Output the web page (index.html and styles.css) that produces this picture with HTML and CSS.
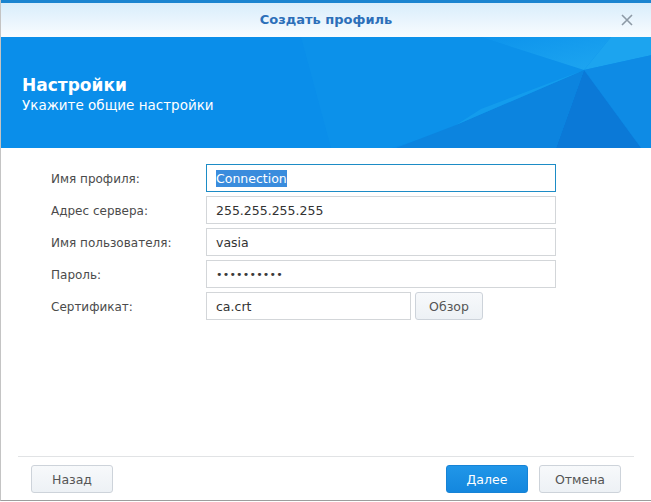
FILE: index.html
```html
<!DOCTYPE html>
<html lang="ru">
<head>
<meta charset="utf-8">
<title>Создать профиль</title>
<link rel="stylesheet" href="styles.css">
</head>
<body>
<div class="window">
  <div class="titlebar">
    <span class="title">Создать профиль</span>
    <span class="close" aria-label="Закрыть">
      <svg width="12" height="12" viewBox="0 0 12 12"><path d="M1 1 L11 11 M11 1 L1 11" stroke="#8d9aa6" stroke-width="1.6" fill="none"/></svg>
    </span>
  </div>

  <div class="banner">
    <svg class="banner-art" viewBox="0 0 651 111" preserveAspectRatio="none">
      <defs>
        <linearGradient id="glow" x1="0" y1="0" x2="1" y2="1">
          <stop offset="0" stop-color="#0d93ec"/>
          <stop offset="1" stop-color="#1ea6f0"/>
        </linearGradient>
      </defs>
      <polygon points="300,0 480,0 583,33 460,90 390,111 330,111" fill="#0f94ec" opacity="0.45"/>
      <polygon points="480,0 610,0 583,33" fill="url(#glow)"/>
      <polygon points="610,0 651,0 651,18 583,33" fill="#1ca4ef"/>
      <polygon points="583,33 651,18 651,111 640,111" fill="#0e8be5"/>
      <polygon points="583,33 640,111 555,111" fill="#0b79d7"/>
      <polygon points="583,33 555,111 395,111 455,88" fill="#0c84df"/>
      <polygon points="583,33 455,88 480,72" fill="#16a0ee" opacity="0.75"/>
    </svg>
    <div class="banner-text">
      <h1 class="heading">Настройки</h1>
      <p class="subheading">Укажите общие настройки</p>
    </div>
  </div>

  <div class="form">
    <div class="row">
      <span class="label">Имя профиля:</span>
      <div class="field focused"><span class="selected">Connection</span></div>
    </div>
    <div class="row">
      <span class="label">Адрес сервера:</span>
      <div class="field">255.255.255.255</div>
    </div>
    <div class="row">
      <span class="label">Имя пользователя:</span>
      <div class="field">vasia</div>
    </div>
    <div class="row">
      <span class="label">Пароль:</span>
      <div class="field password">••••••••••</div>
    </div>
    <div class="row">
      <span class="label">Сертификат:</span>
      <div class="file-pick">
        <div class="field short">ca.crt</div>
        <button class="btn">Обзор</button>
      </div>
    </div>
  </div>

  <div class="footer">
    <div class="footer-line"></div>
    <div class="footer-buttons">
      <button class="btn wide">Назад</button>
      <div class="footer-right">
        <button class="btn wide primary">Далее</button>
        <button class="btn wide">Отмена</button>
      </div>
    </div>
  </div>
</div>
</body>
</html>
```

FILE: styles.css
```css
* { box-sizing: border-box; }

html, body {
  margin: 0;
  padding: 0;
  background: #ffffff;
}

body {
  font-family: "DejaVu Sans", Verdana, sans-serif;
  color: #333;
}

.window {
  width: 651px;
  height: 501px;
  display: flex;
  flex-direction: column;
  border-left: 1px solid #c4c4c4;
  border-bottom: 1px solid #9d9d9d;
  background: #fff;
}

/* title bar */
.titlebar {
  height: 37px;
  border-top: 3px solid #1a84d0;
  background: linear-gradient(#d8edfb, #f9fcff);
  position: relative;
  display: flex;
  align-items: center;
  justify-content: center;
}

.title {
  font-size: 13px;
  font-weight: bold;
  color: #2c6fb9;
  margin-top: -1px;
}

.close {
  position: absolute;
  right: 18px;
  top: 11px;
  width: 12px;
  height: 12px;
  display: block;
}
.close svg { display: block; }

/* banner */
.banner {
  height: 111px;
  background: #0a8eea;
  position: relative;
  overflow: hidden;
}

.banner-art {
  position: absolute;
  left: 0;
  top: 0;
  width: 651px;
  height: 111px;
}

.banner-text {
  position: relative;
  padding: 38px 0 0 21px;
  color: #fff;
}

.heading {
  margin: 0;
  font-size: 17px;
  font-weight: bold;
  line-height: 20px;
}

.subheading {
  margin: 0;
  font-size: 13.5px;
  line-height: 20px;
}

/* form */
.form {
  padding: 16px 0 0 50px;
  display: flex;
  flex-direction: column;
  gap: 4px;
}

.row {
  display: grid;
  grid-template-columns: 155px 350px;
  align-items: center;
  height: 28px;
}

.label {
  font-size: 12px;
  color: #4b4b4b;
  padding-top: 1px;
}

.field {
  height: 28px;
  border: 1px solid #d3d6d9;
  background: #fff;
  padding: 0 9px;
  font-size: 12.5px;
  color: #333;
  display: flex;
  align-items: center;
}

.field.focused {
  border-color: #1d8cc6;
}

.selected {
  background: #3a8cdd;
  color: #fff;
  line-height: 17px;
}

.field.password {
  font-size: 11px;
  letter-spacing: 0.2px;
  color: #3a3a3a;
}

.file-pick {
  display: flex;
  gap: 4px;
}

.field.short {
  width: 205px;
}

/* buttons */
.btn {
  height: 28px;
  width: 68px;
  border: 1px solid #cdd3da;
  border-radius: 3px;
  background: linear-gradient(#f7f9fb, #edf1f5);
  font-family: "DejaVu Sans", Verdana, sans-serif;
  font-size: 12.5px;
  color: #555;
  padding: 0;
}

.btn.wide { width: 82px; }

.btn.primary {
  border-color: #1683d6;
  background: linear-gradient(#2196e8, #1487de);
  color: #fff;
}

/* footer */
.footer {
  margin-top: auto;
  height: 44px;
  padding: 0 30px 0 30px;
}

.footer-line {
  height: 1px;
  background: #e1e3e5;
  margin: 0 -13px 8px -13px;
}

.footer-buttons {
  display: flex;
  justify-content: space-between;
}

.footer-right {
  display: flex;
  gap: 11px;
}
```
